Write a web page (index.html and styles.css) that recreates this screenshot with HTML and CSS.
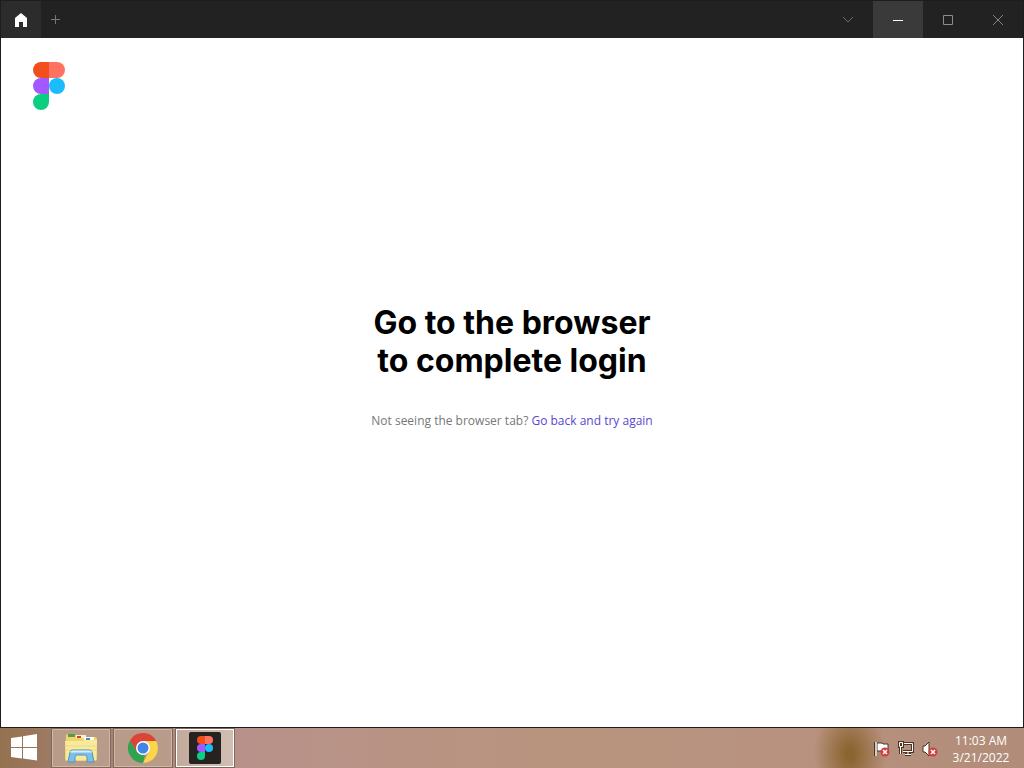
FILE: index.html
```html
<!DOCTYPE html>
<html lang="en">
<head>
<meta charset="utf-8">
<title>Figma login</title>
<link rel="stylesheet" href="styles.css">
</head>
<body>
<div class="window">
  <header class="titlebar">
    <button class="home-tab" aria-label="Home">
      <svg width="14" height="16" viewBox="0 0 14 16"><path d="M7 1 1 6v9h4v-5h4v5h4V6z" fill="#fff"/></svg>
    </button>
    <button class="new-tab" aria-label="New tab">
      <svg width="10" height="10" viewBox="0 0 10 10"><path d="M4.500 0v9M0 4.500h9" stroke="#777" fill="none"/></svg>
    </button>
    <div class="controls">
      <button class="control" aria-label="Tabs menu"><svg width="12" height="8" viewBox="0 0 12 8"><path d="m1 1 5 5 5-5" stroke="#6c6c6c" fill="none"/></svg></button>
      <button class="control control-active" aria-label="Minimize"><svg width="10" height="10" viewBox="0 0 10 10"><path d="M0 5.500h10" stroke="#fff"/></svg></button>
      <button class="control" aria-label="Maximize"><svg width="10" height="10" viewBox="0 0 10 10"><path d="M.5.500h9v9h-9z" stroke="#8c8c8c" fill="none"/></svg></button>
      <button class="control" aria-label="Close"><svg width="12" height="12" viewBox="0 0 12 12"><path d="m1 1 10 10M11 1 1 11" stroke="#858585"/></svg></button>
    </div>
  </header>
  <main class="page">
    <svg class="logo" width="32" height="48" viewBox="0 0 32 48" role="img" aria-label="Figma">
      <path d="M16 0H8a8 8 0 0 0 0 16h8z" fill="#f24e1e"/>
      <path d="M16 0h8a8 8 0 0 1 0 16h-8z" fill="#ff7262"/>
      <path d="M16 16H8a8 8 0 0 0 0 16h8z" fill="#a259ff"/>
      <circle cx="24" cy="24" r="8" fill="#1abcfe"/>
      <path d="M16 32H8a8 8 0 1 0 8 8z" fill="#0acf83"/>
    </svg>
    <section class="message">
      <h1 class="title">Go to the browser<br>to complete login</h1>
      <p class="hint">Not seeing the browser tab? <a class="link" href="#">Go back and try again</a></p>
    </section>
  </main>
</div>
<footer class="taskbar">
  <button class="start" aria-label="Start">
    <svg width="28" height="28" viewBox="0 0 28 28"><path d="M1 4 12 2.500V13H1zM13 2.300 27 0v13H13zM1 14h11v10.500L1 23zM13 14h14v12.500l-14-2z" fill="#fff"/></svg>
  </button>
  <div class="apps">
    <button class="app" aria-label="File Explorer">
      <svg width="34" height="32" viewBox="0 0 34 32">
        <path d="M2 4q0-2 2-2h7l2 3h18q2 0 2 2v20q0 2-2 2H3q-2 0-2-2z" fill="#eed56d"/>
        <path d="M4 2h7v3H4z" fill="#4f9e45"/><path d="M12 3h10v3H12z" fill="#f7efd0"/><path d="M13 4h4v2h-4z" fill="#c9482c"/>
        <path d="M20 5h10v3H20z" fill="#fffbe5"/><path d="M22 6h4v2h-4z" fill="#3e8dc4"/>
        <path d="M1 9h18l2-1h12l-1 20H2z" fill="#f9e99d"/>
        <path d="M2 14h30M2 18h30" stroke="#f2d978"/>
        <path d="M4 30l2-10q0-2 3-2h16q3 0 3 2l2 10h-7v-5q0-2-2-2h-8q-2 0-2 2v5z" fill="#7dbfe8" stroke="#4d94c7"/>
        <path d="M7 20.500q0-1 2-1h16q2 0 2 1" stroke="#d5f0fb" stroke-width="2" fill="none"/>
      </svg>
    </button>
    <button class="app" aria-label="Chrome">
      <svg width="30" height="30" viewBox="0 0 30 30">
        <path d="M15 8h13.200A15 15 0 0 1 15 30l6.100-11.500z" fill="#fcd54a"/>
        <path d="M2 7.500 8.900 18.500 15 22l2 .500L15 30A15 15 0 0 1 2 7.500z" fill="#31a350"/>
        <path d="M2 7.500A15 15 0 0 1 28.200 8H15l-6.100 10.500z" fill="#dc4437"/>
        <circle cx="15" cy="15" r="7" fill="#fff"/><circle cx="15" cy="15" r="5.500" fill="#4285e8"/>
      </svg>
    </button>
    <button class="app app-current" aria-label="Figma">
      <svg width="32" height="32" viewBox="0 0 32 32">
        <rect width="32" height="32" rx="2" fill="#252220"/>
        <path d="M16 4h-4a4 4 0 0 0 0 8h4z" fill="#f24e1e"/><path d="M16 4h4a4 4 0 0 1 0 8h-4z" fill="#ff7262"/>
        <path d="M16 12h-4a4 4 0 0 0 0 8h4z" fill="#a259ff"/><circle cx="20" cy="16" r="4" fill="#1abcfe"/>
        <path d="M16 20h-4a4 4 0 1 0 4 4z" fill="#0acf83"/>
      </svg>
    </button>
  </div>
  <div class="tray">
    <svg width="16" height="16" viewBox="0 0 16 16" role="img" aria-label="Action Center">
      <path d="M1.500 1v14" stroke="#4b3422" stroke-width="3"/><path d="M3 2h5l1 1h5v7H3z" fill="#fff" stroke="#4b3422"/><path d="M2 1v14" stroke="#fff" stroke-width="1.500"/>
      <circle cx="11" cy="11" r="4.500" fill="#cf3f3f"/><path d="m9 9 4 4m0-4-4 4" stroke="#fff" stroke-width="1.500"/>
    </svg>
    <svg width="16" height="16" viewBox="0 0 16 16" role="img" aria-label="Network">
      <path d="M6 2.500h8.500v8H5M10 11v3M7 13.500h6M2.500 6v7M1.500 1.500h3v4h-3z" stroke="#4b3422" stroke-width="3" fill="none"/>
      <path d="M6 2.500h8.500v8H5M10 11v3M7 13.500h6M2.500 6v7M1.500 1.500h3v4h-3z" stroke="#fff" fill="none"/>
    </svg>
    <svg width="16" height="16" viewBox="0 0 16 16" role="img" aria-label="Volume muted">
      <path d="M1 5h2l4-4v14l-4-4H1z" fill="#fff" stroke="#4b3422"/>
      <circle cx="11" cy="11" r="4.500" fill="#cf3f3f"/><path d="m9 9 4 4m0-4-4 4" stroke="#fff" stroke-width="1.500"/>
    </svg>
  </div>
  <time class="clock" datetime="2022-03-21T11:03">11:03 AM<br>3/21/2022</time>
</footer>
</body>
</html>
```
FILE: styles.css
```css
* { box-sizing: border-box; }
body {
  margin: 0;
  min-height: 100vh;
  display: flex;
  flex-direction: column;
  font-family: Inter, "Liberation Sans", sans-serif;
  background: #fff;
}
button {
  display: flex;
  align-items: center;
  justify-content: center;
  padding: 0;
  border: 0;
  background: none;
}
.window {
  flex: 1;
  display: flex;
  flex-direction: column;
  border: 1px solid #1f1d1c;
}
.titlebar {
  display: flex;
  height: 37px;
  background: #222;
}
.home-tab { width: 40px; background: #2c2c2c; }
.new-tab { width: 30px; }
.controls { display: flex; margin-left: auto; }
.control { width: 50px; }
.control-active { background: #3a3a3a; }
.page {
  flex: 1;
  display: flex;
  flex-direction: column;
  padding: 24px 32px;
}
.message {
  flex: 1;
  display: flex;
  flex-direction: column;
  align-items: center;
  justify-content: center;
  gap: 32px;
  padding-bottom: 80px;
  text-align: center;
}
.title {
  margin: 0;
  font-size: 32px;
  line-height: 38px;
  font-weight: 700;
  color: #000;
}
.hint {
  margin: 0;
  font-family: "Open Sans", sans-serif;
  font-size: 12px;
  line-height: 18px;
  color: #777;
}
.link { color: #5747d1; text-decoration: none; }
.taskbar {
  display: flex;
  align-items: flex-start;
  height: 40px;
  background:
    radial-gradient(ellipse 36px 50px at 83% 65%, #8b6430 10%, transparent),
    linear-gradient(90deg, #94714f, #a38070 8%, #b8928a 24%, #b8947f 52%, #b8927e 78%, #b18c78);
}
.start { width: 48px; height: 39px; }
.apps { display: flex; gap: 4px; margin: 1px 0 0 4px; }
.app {
  width: 58px;
  height: 38px;
  border: 1px solid #d1b7a8;
  outline: 1px solid #80675b;
  background: #b99b89;
}
.app-current { border-color: #fff; background: linear-gradient(90deg, #c2aa9c, #d1bfb4); }
.tray { display: flex; gap: 8px; margin: 13px 0 0 auto; }
.clock {
  width: 86px;
  margin-top: 4px;
  font-family: "Open Sans", sans-serif;
  font-size: 12px;
  line-height: 17px;
  text-align: center;
  color: #fff;
}
```
